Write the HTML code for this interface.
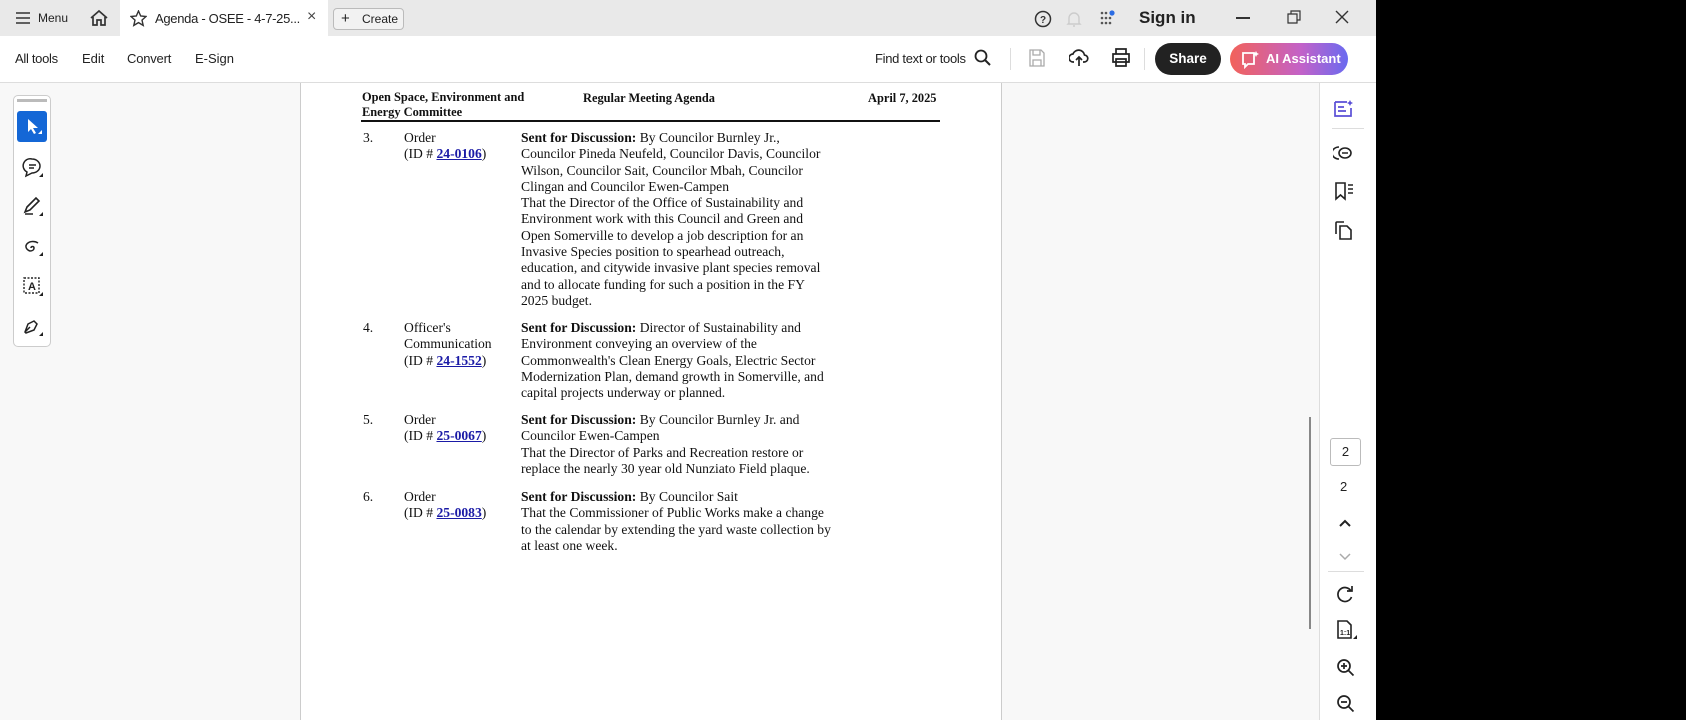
<!DOCTYPE html>
<html><head><meta charset="utf-8"><style>
*{margin:0;padding:0;box-sizing:border-box}
body{width:1686px;height:720px;overflow:hidden;background:#000;font-family:"Liberation Sans",sans-serif;position:relative}
#app{position:absolute;left:0;top:0;width:1376px;height:720px;background:#f8f8f8}
#tabs{position:absolute;left:0;top:0;width:1376px;height:36px;background:#e9e9e9}
#tb{position:absolute;left:0;top:36px;width:1376px;height:47px;background:#fff;border-bottom:1px solid #ddd}
.a{position:absolute;white-space:nowrap}
.ui{font-size:13px;color:#222}
#page{position:absolute;left:300px;top:83px;width:702px;height:637px;background:#fff;border-left:1px solid #ccc;border-right:1px solid #ccc}
.d{position:absolute;font-family:"Liberation Serif",serif;font-size:13.6px;line-height:16.3px;color:#111;white-space:nowrap}
.d b{font-weight:bold}
.d u{color:#1a1aa6;font-weight:bold}
#rp{position:absolute;left:1319px;top:83px;width:57px;height:637px;background:#fff;border-left:1px solid #ddd}
svg{position:absolute}
</style></head><body><div id="app">
<div id="tabs">
 <svg style="left:15px;top:11px" width="16" height="14"><path d="M1 2h14M1 7h14M1 12h14" stroke="#333" stroke-width="1.6"/></svg>
 <div class="a ui" style="left:38px;top:11px;font-size:12px">Menu</div>
 <svg style="left:89px;top:9px" width="20" height="18"><path d="M2 9L10 2l8 7M4 8v8h4v-5h4v5h4V8" fill="none" stroke="#333" stroke-width="1.7"/></svg>
 <div class="a" style="left:120px;top:0;width:208px;height:36px;background:#fff"></div>
 <svg style="left:130px;top:10px" width="17" height="17"><path d="M8.5 1l2.2 5 5.3.5-4 3.6 1.2 5.3-4.7-2.8-4.7 2.8 1.2-5.3-4-3.6 5.3-.5z" fill="none" stroke="#333" stroke-width="1.4"/></svg>
 <div class="a ui" style="left:155px;top:11px;font-size:13px;letter-spacing:-0.3px">Agenda - OSEE - 4-7-25...</div>
 <div class="a" style="left:307px;top:8px;font-size:16px;color:#444">×</div>
 <div class="a" style="left:333px;top:8px;width:71px;height:22px;border:1px solid #bbb;border-radius:4px;background:#f2f2f2"></div>
 <div class="a ui" style="left:341px;top:10px;font-size:15px">+</div>
 <div class="a ui" style="left:362px;top:12px;font-size:12px">Create</div>
 <svg style="left:1034px;top:10px" width="18" height="18"><circle cx="9" cy="9" r="7.5" fill="none" stroke="#333" stroke-width="1.5"/><text x="6" y="13" font-size="10" font-weight="bold" fill="#333" font-family="Liberation Sans">?</text></svg>
 <svg style="left:1066px;top:10px" width="16" height="18"><path d="M3 13V8a5 5 0 0110 0v5l1 1H2zM7 16h2" fill="none" stroke="#ccc" stroke-width="1.4"/></svg>
 <svg style="left:1099px;top:10px" width="18" height="18"><g fill="#555"><circle cx="3" cy="3" r="1.3"/><circle cx="7" cy="3" r="1.3"/><circle cx="3" cy="8" r="1.3"/><circle cx="7" cy="8" r="1.3"/><circle cx="11" cy="8" r="1.3"/><circle cx="3" cy="13" r="1.3"/><circle cx="7" cy="13" r="1.3"/><circle cx="11" cy="13" r="1.3"/></g><circle cx="13" cy="3" r="2.6" fill="#2b6ce3"/></svg>
 <div class="a" style="left:1139px;top:8px;font-size:17px;font-weight:bold;color:#222">Sign in</div>
 <div class="a" style="left:1236px;top:17px;width:14px;height:1.5px;background:#333"></div>
 <svg style="left:1287px;top:10px" width="14" height="14"><path d="M1 4h9v9H1zM4 4V1h9v9h-3" fill="none" stroke="#333" stroke-width="1.2"/></svg>
 <svg style="left:1335px;top:10px" width="14" height="14"><path d="M1 1l12 12M13 1L1 13" stroke="#333" stroke-width="1.4"/></svg>
</div>
<div id="tb">
 <div class="a ui" style="left:15px;top:15px;letter-spacing:-0.3px">All tools</div>
 <div class="a ui" style="left:82px;top:15px">Edit</div>
 <div class="a ui" style="left:127px;top:15px;letter-spacing:-0.2px">Convert</div>
 <div class="a ui" style="left:195px;top:15px">E-Sign</div>
 <div class="a ui" style="left:875px;top:15px;letter-spacing:-0.3px">Find text or tools</div>
 <svg style="left:974px;top:13px" width="18" height="18"><circle cx="7" cy="7" r="5.5" fill="none" stroke="#222" stroke-width="1.8"/><path d="M11 11l5 5" stroke="#222" stroke-width="2"/></svg>
 <div class="a" style="left:1010px;top:12px;width:1px;height:22px;background:#ddd"></div>
 <svg style="left:1029px;top:13px" width="16" height="18"><path d="M1 1h11l3 3v13H1zM4 1v5h7V1M4 17v-6h8v6" fill="none" stroke="#aaa" stroke-width="1.3"/></svg>
 <svg style="left:1069px;top:12px" width="20" height="20"><path d="M5 14H4a4 4 0 010-8 6 6 0 0111.5 1A3.5 3.5 0 0115 14h-1M10 18V9M7 12l3-3 3 3" fill="none" stroke="#222" stroke-width="1.7"/></svg>
 <svg style="left:1112px;top:12px" width="18" height="20"><path d="M4 6V1h10v5M1 6h16v8H1zM4 11h10v7H4z" fill="#fff" stroke="#222" stroke-width="1.7"/></svg>
 <div class="a" style="left:1144px;top:12px;width:1px;height:22px;background:#ddd"></div>
 <div class="a" style="left:1155px;top:7px;width:66px;height:32px;border-radius:16px;background:#222;color:#fff;font-size:13.5px;font-weight:bold;text-align:center;line-height:32px">Share</div>
 <div class="a" style="left:1230px;top:7px;width:118px;height:32px;border-radius:16px;background:linear-gradient(90deg,#f2625a,#c362c8 60%,#6a6af0);color:#fff;font-size:13px;font-weight:bold;line-height:32px;padding-left:36px">AI Assistant</div>
 <svg style="left:1241px;top:15px" width="20" height="18"><path d="M2 2h11v11H7l-3 3v-3H2z" fill="none" stroke="#fff" stroke-width="1.8"/><path d="M15 0l1 2 2 1-2 1-1 2-1-2-2-1 2-1z" fill="#fff"/></svg>
</div>
<div class="a" style="left:13px;top:95px;width:38px;height:252px;border:1px solid #ccc;border-radius:5px;background:#fff"></div>
<div class="a" style="left:17px;top:99px;width:30px;height:3px;background:#bbb"></div>
<div class="a" style="left:17px;top:111px;width:30px;height:31px;background:#1467d6;border-radius:3px"></div>
<svg style="left:25px;top:117px" width="18" height="20"><path d="M3 2v13l3-3 3 5 2-1-3-5h5z" fill="#fff"/><path d="M13 17h4v-4z" fill="#fff"/></svg>
<svg style="left:22px;top:157px" width="22" height="22"><path d="M10 2a8 7 0 110 14l-6 3 1-4A7 7 0 0110 2zM7 8h7M7 11h5" fill="none" stroke="#222" stroke-width="1.5"/><path d="M17 20h4v-4z" fill="#222"/></svg>
<svg style="left:22px;top:196px" width="22" height="22"><path d="M3 16l2-5 9-9 3 3-9 9zM3 18h8" fill="none" stroke="#222" stroke-width="1.6"/><path d="M17 20h4v-4z" fill="#222"/></svg>
<svg style="left:22px;top:236px" width="22" height="22"><path d="M16 7a7 5 0 10-8 8c2 0 4-1 4-3s-3-2-3 0" fill="none" stroke="#222" stroke-width="1.5"/><path d="M17 20h4v-4z" fill="#222"/></svg>
<svg style="left:22px;top:276px" width="22" height="22"><rect x="2" y="2" width="15" height="15" fill="none" stroke="#222" stroke-width="1.4" stroke-dasharray="2 1.5"/><text x="6" y="14" font-size="11" font-family="Liberation Sans" font-weight="bold" fill="#222">A</text><path d="M17 20h4v-4z" fill="#222"/></svg>
<svg style="left:22px;top:316px" width="22" height="22"><path d="M3 16l3-8 6-3 3 3-3 6-8 3zM3 16l5-5" fill="none" stroke="#222" stroke-width="1.5"/><path d="M17 20h4v-4z" fill="#222"/></svg>
<div id="page">
 <div class="d" style="left:61px;top:7px;font-size:12.4px;line-height:15px"><b>Open Space, Environment and<br>Energy Committee</b></div>
 <div class="d" style="left:282px;top:7px;font-size:12.4px"><b>Regular Meeting Agenda</b></div>
 <div class="d" style="left:567px;top:7px;font-size:12.4px"><b>April 7, 2025</b></div>
 <div class="a" style="left:60px;top:37px;width:579px;height:2px;background:#111"></div>
 <div class="d" style="left:62px;top:47px">3.</div>
 <div class="d" style="left:103px;top:47px">Order<br>(ID # <u>24-0106</u>)</div>
 <div class="d" style="left:220px;top:47px"><b>Sent for Discussion:</b> By Councilor Burnley Jr.,<br>Councilor Pineda Neufeld, Councilor Davis, Councilor<br>Wilson, Councilor Sait, Councilor Mbah, Councilor<br>Clingan and Councilor Ewen-Campen<br>That the Director of the Office of Sustainability and<br>Environment work with this Council and Green and<br>Open Somerville to develop a job description for an<br>Invasive Species position to spearhead outreach,<br>education, and citywide invasive plant species removal<br>and to allocate funding for such a position in the FY<br>2025 budget.</div>
 <div class="d" style="left:62px;top:237px">4.</div>
 <div class="d" style="left:103px;top:237px">Officer's<br>Communication<br>(ID # <u>24-1552</u>)</div>
 <div class="d" style="left:220px;top:237px"><b>Sent for Discussion:</b> Director of Sustainability and<br>Environment conveying an overview of the<br>Commonwealth's Clean Energy Goals, Electric Sector<br>Modernization Plan, demand growth in Somerville, and<br>capital projects underway or planned.</div>
 <div class="d" style="left:62px;top:329px">5.</div>
 <div class="d" style="left:103px;top:329px">Order<br>(ID # <u>25-0067</u>)</div>
 <div class="d" style="left:220px;top:329px"><b>Sent for Discussion:</b> By Councilor Burnley Jr. and<br>Councilor Ewen-Campen<br>That the Director of Parks and Recreation restore or<br>replace the nearly 30 year old Nunziato Field plaque.</div>
 <div class="d" style="left:62px;top:406px">6.</div>
 <div class="d" style="left:103px;top:406px">Order<br>(ID # <u>25-0083</u>)</div>
 <div class="d" style="left:220px;top:406px"><b>Sent for Discussion:</b> By Councilor Sait<br>That the Commissioner of Public Works make a change<br>to the calendar by extending the yard waste collection by<br>at least one week.</div>
</div>
<div class="a" style="left:1309px;top:417px;width:2px;height:212px;background:#888"></div>
<div id="rp">
 <svg style="left:13px;top:16px" width="22" height="20"><path d="M2 3h12M2 3v14h16V9M5 8h6M5 12h8" fill="none" stroke="#5a4fd6" stroke-width="1.7"/><path d="M17 1l1 2 2 1-2 1-1 2-1-2-2-1 2-1z" fill="#5a4fd6"/></svg>
 <div class="a" style="left:12px;top:45px;width:32px;height:1px;background:#ddd"></div>
 <svg style="left:13px;top:60px" width="22" height="20"><path d="M6 4a7 6 0 100 12" fill="none" stroke="#222" stroke-width="1.6"/><ellipse cx="12" cy="10" rx="6" ry="5" fill="none" stroke="#222" stroke-width="1.6"/><path d="M9 10h6" stroke="#222" stroke-width="1.5"/></svg>
 <svg style="left:14px;top:98px" width="22" height="20"><path d="M2 2h9v16l-4.5-4L2 18z" fill="none" stroke="#222" stroke-width="1.6"/><path d="M14 4h5M14 8h5M14 12h5" stroke="#222" stroke-width="1.4"/></svg>
 <svg style="left:14px;top:137px" width="20" height="20"><path d="M2 14V3a1 1 0 011-1h7M6 6h7l4 4v9H6z" fill="none" stroke="#222" stroke-width="1.6"/></svg>
 <div class="a" style="left:10px;top:355px;width:31px;height:28px;border:1px solid #bbb;border-radius:3px;font-size:13px;text-align:center;line-height:26px;color:#222">2</div>
 <div class="a" style="left:20px;top:396px;font-size:13px;color:#222">2</div>
 <svg style="left:19px;top:436px" width="12" height="8"><path d="M1 7l5-5 5 5" fill="none" stroke="#222" stroke-width="2"/></svg>
 <svg style="left:19px;top:470px" width="12" height="8"><path d="M1 1l5 5 5-5" fill="none" stroke="#aaa" stroke-width="1.5"/></svg>
 <div class="a" style="left:8px;top:488px;width:36px;height:1px;background:#ddd"></div>
 <svg style="left:16px;top:502px" width="18" height="18"><path d="M15 6a7 7 0 10.5 6M16 1v5h-5" fill="none" stroke="#222" stroke-width="1.7"/></svg>
 <svg style="left:16px;top:537px" width="22" height="20"><path d="M2 1h9l4 4v13H2z" fill="none" stroke="#222" stroke-width="1.6"/><text x="4" y="15" font-size="7" font-family="Liberation Sans" font-weight="bold" fill="#222">1:1</text><path d="M17 19h4v-4z" fill="#222"/></svg>
 <svg style="left:16px;top:575px" width="20" height="20"><circle cx="8" cy="8" r="6" fill="none" stroke="#222" stroke-width="1.7"/><path d="M12.5 12.5l5 5M5 8h6M8 5v6" stroke="#222" stroke-width="1.7"/></svg>
 <svg style="left:16px;top:611px" width="20" height="20"><circle cx="8" cy="8" r="6" fill="none" stroke="#222" stroke-width="1.7"/><path d="M12.5 12.5l5 5M5 8h6" stroke="#222" stroke-width="1.7"/></svg>
</div>
</div></body></html>
